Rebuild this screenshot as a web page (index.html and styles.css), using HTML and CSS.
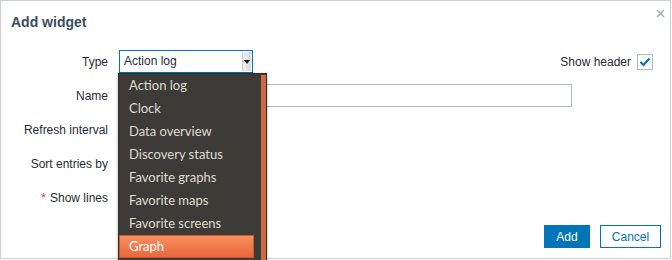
FILE: index.html
```html
<!DOCTYPE html>
<html lang="en">
<head>
  <meta charset="UTF-8">
  <meta name="viewport" content="width=device-width, initial-scale=1.0">
  <title>Add widget</title>
  <link rel="stylesheet" href="styles.css">
</head>
<body>

<div class="dialog">
  <div class="dialog-head">
    <h4>Add widget</h4>
    <button class="close" title="Close">
      <svg width="9" height="9" viewBox="0 0 9 9"><path d="M1 1 L8 8 M8 1 L1 8" stroke="#a8b1b8" stroke-width="1.6"/></svg>
    </button>
  </div>

  <div class="form">
    <label>Type</label>
    <div class="field field-type">
      <div class="select">
        <span class="select-value">Action log</span>
        <span class="select-arrow"><i></i></span>
      </div>
      <div class="show-header">
        <span>Show header</span>
        <span class="checkbox">
          <svg width="14" height="14" viewBox="0 0 14 14"><path d="M2.5 7 L5.5 10 L11.5 3.5" fill="none" stroke="#0275b8" stroke-width="2.2"/></svg>
        </span>
      </div>
    </div>

    <label>Name</label>
    <div class="field"><div class="input"></div></div>

    <label>Refresh interval</label>
    <div class="field"></div>

    <label>Sort entries by</label>
    <div class="field"></div>

    <label><span class="req">*</span> Show lines</label>
    <div class="field"></div>
  </div>

  <div class="dialog-foot">
    <button class="btn btn-primary">Add</button>
    <button class="btn btn-alt">Cancel</button>
  </div>

  <ul class="dropdown">
    <li>Action log</li>
    <li>Clock</li>
    <li>Data overview</li>
    <li>Discovery status</li>
    <li>Favorite graphs</li>
    <li>Favorite maps</li>
    <li>Favorite screens</li>
    <li class="active">Graph</li>
    <span class="scroll"></span>
  </ul>
</div>

</body>
</html>
```

FILE: styles.css
```css
html, body {
  margin: 0;
  height: 260px;
  overflow: hidden;
  background: #fff;
}

body {
  font-family: "Liberation Sans", Arial, sans-serif;
  font-size: 12px;
  color: #1f2c33;
}

.dialog {
  position: relative;
  box-sizing: border-box;
  width: 671px;
  height: 259px;
  border: 1px solid #c9d1d5;
  background: #fff;
}

.dialog-head {
  display: flex;
  justify-content: space-between;
  align-items: flex-start;
  height: 38px;
  padding: 11px 0 0 10px;
  box-sizing: border-box;
}

.dialog-head h4 {
  margin: 0;
  font-size: 14px;
  line-height: 20px;
  font-weight: bold;
  color: #384d60;
}

.close {
  border: 0;
  background: none;
  padding: 0;
  margin: -3px 5px 0 0;
  width: 9px;
  height: 9px;
  cursor: pointer;
}

.close svg {
  display: block;
}

.form {
  display: grid;
  grid-template-columns: 107px 1fr;
  grid-auto-rows: 23px;
  column-gap: 11px;
  row-gap: 11px;
  margin-top: 11px;
  padding-right: 17px;
}

.form label {
  display: flex;
  align-items: center;
  justify-content: flex-end;
  white-space: nowrap;
}

.req {
  color: #e33734;
  margin-right: 4px;
}

.field {
  display: flex;
  align-items: center;
}

.field-type {
  justify-content: space-between;
}

.select {
  display: flex;
  box-sizing: border-box;
  width: 134px;
  height: 23px;
  border: 1px solid #0275b8;
  background: #fff;
}

.select-value {
  flex: 1;
  padding-left: 4px;
  line-height: 21px;
}

.select-arrow {
  display: flex;
  align-items: center;
  justify-content: center;
  width: 8px;
  margin: 1px 1px 1px 0;
  background: linear-gradient(to right, #f2f2f2, #d8d8d8);
  border-left: 1px solid #c8c8c8;
}

.select-arrow i {
  width: 0;
  height: 0;
  border-left: 3px solid transparent;
  border-right: 3px solid transparent;
  border-top: 4px solid #111;
}

.show-header {
  display: flex;
  align-items: center;
  gap: 6px;
}

.checkbox {
  display: flex;
  align-items: center;
  justify-content: center;
  box-sizing: border-box;
  width: 16px;
  height: 16px;
  border: 1px solid #acbbc2;
  background: #fff;
}

.input {
  box-sizing: border-box;
  width: 453px;
  height: 23px;
  border: 1px solid #acbbc2;
  background: #fff;
}

.dialog-foot {
  display: flex;
  justify-content: flex-end;
  gap: 10px;
  margin-top: 16px;
  padding-right: 9px;
}

.btn {
  box-sizing: border-box;
  height: 23px;
  padding: 0 10px;
  font-family: "Liberation Sans", Arial, sans-serif;
  font-size: 12px;
  border: 1px solid #0275b8;
  cursor: pointer;
}

.btn-primary {
  width: 46px;
  background: #0275b8;
  color: #fff;
}

.btn-alt {
  width: 61px;
  background: #fff;
  color: #0275b8;
}

/* open list of the Type select */
.dropdown {
  position: absolute;
  left: 117px;
  top: 72px;
  box-sizing: border-box;
  width: 149px;
  height: 190px;
  margin: 0;
  padding: 0 12px 0 0;
  list-style: none;
  background: #3c3b37;
  border: 1px solid #2b2a27;
  box-shadow: 0 1px 3px rgba(0, 0, 0, 0.3);
  font-family: Lato, "Open Sans", sans-serif;
  font-size: 13px;
  color: #dfdbd2;
}

.dropdown li {
  box-sizing: border-box;
  height: 23px;
  line-height: 23px;
  padding-left: 10px;
}

.dropdown li.active {
  background: linear-gradient(to bottom, #f88f60, #e9683a);
  border: 1px solid #c85a2e;
  line-height: 21px;
  padding-left: 9px;
  color: #fff;
}

.dropdown .scroll {
  position: absolute;
  right: 0;
  top: 1px;
  bottom: 0;
  width: 5px;
  background: #d0693d;
}
```
